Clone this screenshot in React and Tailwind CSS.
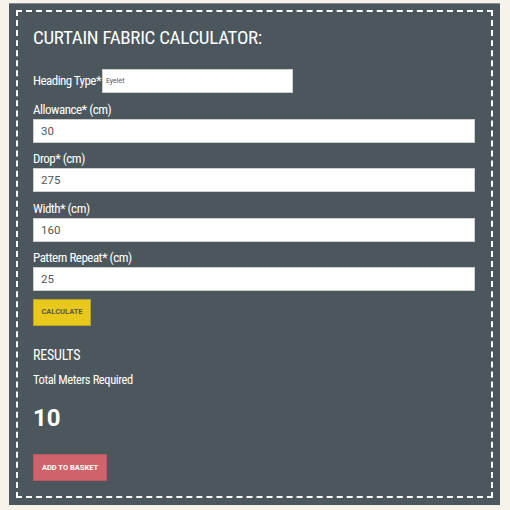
import { useState } from "react";

const fields = [
  { name: "allowance", label: "Allowance* (cm)", value: "30" },
  { name: "drop", label: "Drop* (cm)", value: "275" },
  { name: "width", label: "Width* (cm)", value: "160" },
  { name: "repeat", label: "Pattern Repeat* (cm)", value: "25" },
];

const condensed = "font-['Roboto_Condensed','Roboto',sans-serif]";

const App = () => {
  const [values, setValues] = useState(
    Object.fromEntries(fields.map((f) => [f.name, f.value]))
  );

  return (
    <div className="w-[510px] h-[510px] bg-[#f7f3ea] pt-[3px] pl-[9px] font-['Roboto',sans-serif]">
      <div className="w-[491px] bg-[#4b575d] border-t border-[#8a9094] p-[7px] pt-[6px]">
        <div className="border-2 border-dashed border-white pl-[15px] pr-[14px] pt-[14px] pb-[15px]">
          <h1 className={`${condensed} text-[19px] leading-[24px] text-white tracking-[-0.3px]`}>
            CURTAIN FABRIC CALCULATOR:
          </h1>

          {/* Heading type */}
          <div className="flex items-center mt-[19px]">
            <label className={`${condensed} text-[13px] leading-[20px] text-white tracking-[-0.55px] mr-[1px]`}>
              Heading Type*
            </label>
            <div className="w-[191px] h-[24px] bg-white border border-[#cfcfcf] flex items-center px-[3px] text-[7px] text-[#555]">
              Eyelet
            </div>
          </div>

          {fields.map((f) => (
            <div key={f.name} className="mt-[5.5px]">
              <label className={`${condensed} block pt-[1px] text-[13px] leading-[19px] text-white tracking-[-0.5px]`}>
                {f.label}
              </label>
              <input
                className="block w-[442px] h-[24px] bg-white border border-[#cfcfcf] px-[7px] text-[11.5px] text-[#555] outline-none font-['Roboto',sans-serif]"
                value={values[f.name]}
                onChange={(e) =>
                  setValues((prev) => ({ ...prev, [f.name]: e.target.value }))
                }
              />
            </div>
          ))}

          <button className="mt-[7.5px] w-[58px] h-[27px] bg-[#e8c81a] border border-[#b8a22a] text-[7.5px] font-bold text-[#5a5a4a] uppercase">
            Calculate
          </button>

          <h2 className={`${condensed} mt-[19px] text-[14px] leading-[20px] text-white tracking-[-0.2px]`}>
            RESULTS
          </h2>
          <p className={`${condensed} mt-[6.7px] text-[12.5px] leading-[18px] text-white tracking-[-0.4px]`}>
            Total Meters Required
          </p>
          <p className="mt-[13px] text-[24px] leading-[32px] font-bold text-white">
            10
          </p>

          <button className="mt-[20px] w-[74px] h-[27px] bg-[#cf636c] border border-[#b9565e] text-[7.5px] font-bold text-white uppercase">
            Add to Basket
          </button>
        </div>
      </div>
    </div>
  );
};

export default App;
